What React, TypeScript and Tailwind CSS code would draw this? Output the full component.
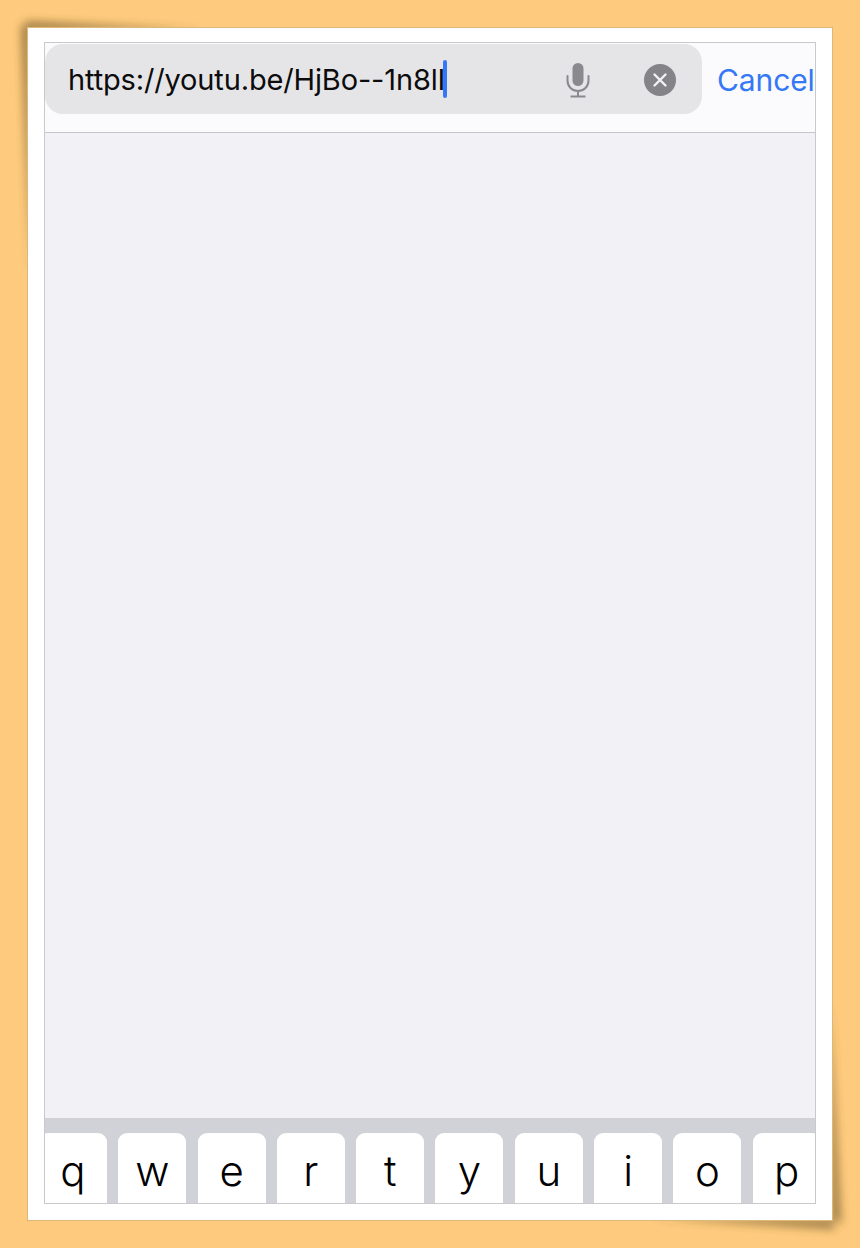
import React from 'react';

const KEYS = ['q', 'w', 'e', 'r', 't', 'y', 'u', 'i', 'o', 'p'];

const MicIcon = () => (
    <svg width="26" height="36" viewBox="0 0 26 36" fill="none" className="shrink-0">
        <rect x="7.500" y="1" width="11" height="23" rx="5.500" fill="#8a8a8e" />
        <path d="M2.500 14v4.500C2.500 24.500 7 29 13 29s10.500-4.500 10.500-10.500V14" stroke="#8a8a8e" strokeWidth="2" strokeLinecap="round" />
        <path d="M13 29v5M5.500 34.500h15" stroke="#8a8a8e" strokeWidth="2" />
    </svg>
);

const ClearIcon = () => (
    <svg width="32" height="32" viewBox="0 0 32 32" className="shrink-0">
        <circle cx="16" cy="16" r="16" fill="#838388" />
        <path d="M10.500 10.500l11 11M21.500 10.500l-11 11" stroke="#f2f2f4" strokeWidth="2.400" strokeLinecap="round" />
    </svg>
);

// the curled-paper shadow behind the card, only near two corners
const PaperShadow = () => (
    <svg width="860" height="1248" viewBox="0 0 860 1248" className="absolute inset-0">
        <defs>
            <filter id="soft" x="-20%" y="-20%" width="140%" height="140%">
                <feGaussianBlur stdDeviation="4.500" />
            </filter>
        </defs>
        <g fill="#5a4520" fillOpacity="0.6" filter="url(#soft)">
            <polygon points="24,21 205,30 30,30" />
            <polygon points="21,24 30,30 30,280" />
        </g>
        <g fill="#5a4520" fillOpacity="0.5" filter="url(#soft)">
            <polygon points="836,1230 650,1218 830,1218" />
            <polygon points="842,1224 830,1218 830,1000" />
        </g>
    </svg>
);

export default function App() {
    return (
        <div className="relative w-[860px] h-[1248px] bg-[#fecb7e] pt-[27px] pl-[27px] overflow-hidden font-['Inter','Liberation_Sans',sans-serif]">
            <PaperShadow />
            <div className="relative w-[806px] h-[1194px] bg-white pt-[14px] px-[16px] border border-[#dcb77a]">
                <div className="h-[1162px] border border-[#c9c9cc] flex flex-col overflow-hidden">
                    {/* search header */}
                    <div className="h-[90px] shrink-0 bg-[#fbfbfd] border-b border-[#c6c6ca] flex items-start pt-[1px] gap-[15px]">
                        <div className="w-[657px] h-[70px] shrink-0 bg-[#e5e5e8] rounded-[18px] flex items-center pl-[23px] pr-[26px]">
                            <span className="text-[29px] pt-[2px] tracking-[-0.15px] text-[#0c0c0c] whitespace-nowrap">https://youtu.be/HjBo--1n8lI</span>
                            <span className="w-[4px] h-[38px] ml-[-2px] bg-[#3478f6] rounded-full shrink-0" />
                            <div className="ml-auto flex items-center gap-[53px] pt-[1px]">
                                <MicIcon />
                                <ClearIcon />
                            </div>
                        </div>
                        <span className="text-[30px] pt-[1px] leading-[70px] tracking-[-0.1px] text-[#3478f6]">Cancel</span>
                    </div>

                    <div className="flex-1 bg-[#f2f1f6]" />

                    {/* keyboard, cropped below the first row */}
                    <div className="h-[85px] shrink-0 bg-[#d1d2d8] pt-[15px] overflow-hidden">
                        <div className="flex gap-[11.300px] ml-[-6px] h-[90px]">
                            {KEYS.map((k) => (
                                <div key={k} className="w-[68px] shrink-0 h-full bg-white rounded-[9px] flex justify-center text-[42px] leading-[76px] font-light text-black">
                                    {k}
                                </div>
                            ))}
                        </div>
                    </div>
                </div>
            </div>
        </div>
    );
}
